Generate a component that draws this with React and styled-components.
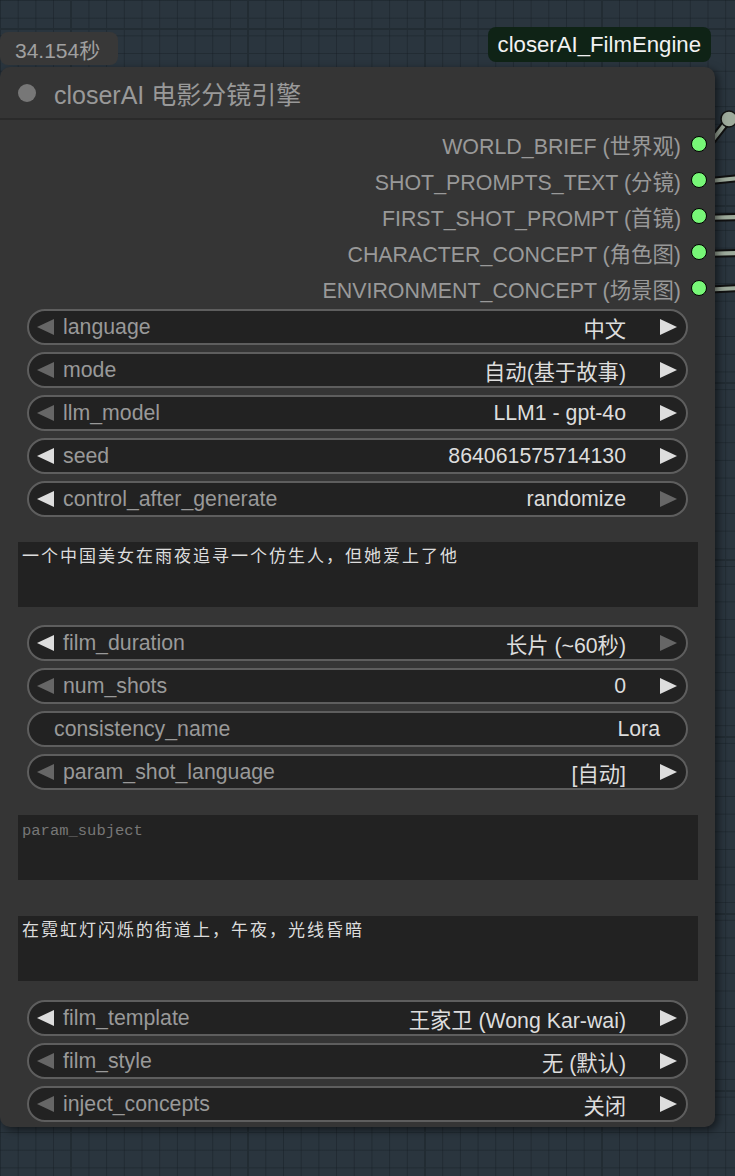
import React from "react";
import styled, { createGlobalStyle } from "styled-components";

const GlobalStyle = createGlobalStyle`
  html, body {
    margin: 0;
    padding: 0;
    background: #2a353e;
  }
  * {
    box-sizing: border-box;
  }
`;

const SANS = `"Liberation Sans", "Noto Sans CJK SC", sans-serif`;
const MONO = `"Liberation Mono", "Noto Sans CJK SC", monospace`;

const outputs = [
  "WORLD_BRIEF (世界观)",
  "SHOT_PROMPTS_TEXT (分镜)",
  "FIRST_SHOT_PROMPT (首镜)",
  "CHARACTER_CONCEPT (角色图)",
  "ENVIRONMENT_CONCEPT (场景图)",
];

const App = () => {
  return (
    <Canvas>
      <GlobalStyle />
      <Wires width="40" height="220" viewBox="0 0 40 220">
        <g strokeLinecap="round">
          <line x1="8" y1="46" x2="29" y2="19" stroke="#111" strokeWidth="8" />
          <line x1="8" y1="46" x2="29" y2="19" stroke="#9eab9c" strokeWidth="4" />
          <circle cx="29" cy="19" r="8" fill="#9eab9c" stroke="#111" strokeWidth="1.5" />
          {[
            [82, 78],
            [118, 117],
            [154, 153],
            [190, 188],
          ].map(([a, b], i) => (
            <g key={i}>
              <line x1="0" y1={a} x2="40" y2={b} stroke="#111" strokeWidth="8" />
              <line x1="0" y1={a} x2="40" y2={b} stroke="#9eab9c" strokeWidth="4" />
            </g>
          ))}
        </g>
      </Wires>
      <Node>
        <TimerBadge>34.154秒</TimerBadge>
        <TypeBadge>closerAI_FilmEngine</TypeBadge>
        <TitleBar>
          <TitleDot />
          <Title>closerAI 电影分镜引擎</Title>
        </TitleBar>
        <Outputs>
          {outputs.map((o) => (
            <OutputRow key={o}>
              <span>{o}</span>
              <Slot />
            </OutputRow>
          ))}
        </Outputs>
        <Widgets>
          <Combo label="language" value="中文" left="dim" right="on" />
          <Combo label="mode" value="自动(基于故事)" left="dim" right="on" />
          <Combo label="llm_model" value="LLM1 - gpt-4o" left="dim" right="on" />
          <Combo label="seed" value="864061575714130" left="on" right="on" />
          <Combo label="control_after_generate" value="randomize" left="on" right="dim" />
          <TextArea $mt={18} $mb={11}>一个中国美女在雨夜追寻一个仿生人，但她爱上了他</TextArea>
          <Combo label="film_duration" value="长片 (~60秒)" left="on" right="dim" />
          <Combo label="num_shots" value="0" left="dim" right="on" />
          <TextWidget>
            <Label>consistency_name</Label>
            <Value>Lora</Value>
          </TextWidget>
          <Combo label="param_shot_language" value="[自动]" left="dim" right="on" />
          <TextArea $mt={18} $mb={11} $placeholder>param_subject</TextArea>
          <TextArea $mt={18} $mb={12}>在霓虹灯闪烁的街道上，午夜，光线昏暗</TextArea>
          <Combo label="film_template" value="王家卫 (Wong Kar-wai)" left="on" right="on" />
          <Combo label="film_style" value="无 (默认)" left="dim" right="on" />
          <Combo label="inject_concepts" value="关闭" left="dim" right="on" />
        </Widgets>
      </Node>
    </Canvas>
  );
};

const Combo = ({ label, value, left, right }) => (
  <Widget>
    <ArrowLeft $on={left === "on"} />
    <Label>{label}</Label>
    <Value>{value}</Value>
    <ArrowRight $on={right === "on"} />
  </Widget>
);

export default App;

const Canvas = styled.div`
  position: relative;
  width: 735px;
  height: 1176px;
  overflow: hidden;
  padding-top: 67px;
  background-color: #2a353e;
  background-image: linear-gradient(to right, #222c33 2px, transparent 2px),
    linear-gradient(to bottom, #222c33 2px, transparent 2px),
    linear-gradient(to right, rgba(20, 28, 34, 0.4) 1px, transparent 1px),
    linear-gradient(to bottom, rgba(20, 28, 34, 0.4) 1px, transparent 1px);
  background-size: 177px 177px, 177px 177px, 17.7px 17.7px, 17.7px 17.7px;
  background-position: 70px 0, 0 28px, 0 0, 0 0;
`;

const Wires = styled.svg`
  position: absolute;
  left: 700px;
  top: 100px;
  overflow: visible;
`;

const Node = styled.div`
  position: relative;
  width: 715px;
  padding-bottom: 5px;
  background: #353535;
  border-radius: 10px;
  box-shadow: 3px 3px 8px rgba(0, 0, 0, 0.55);
  font-family: ${SANS};
`;

const TimerBadge = styled.div`
  position: absolute;
  top: -35px;
  left: 0;
  width: 118px;
  height: 33px;
  padding-left: 15px;
  display: flex;
  align-items: center;
  background: #383838;
  border-radius: 8px;
  color: #a0a0a0;
  font-size: 21px;
`;

const TypeBadge = styled.div`
  position: absolute;
  top: -40px;
  right: 4px;
  height: 35px;
  padding: 0 10px;
  display: flex;
  align-items: center;
  background: #0f2316;
  border-radius: 8px;
  color: #f2f2f2;
  font-size: 22.2px;
`;

const TitleBar = styled.div`
  height: 53px;
  display: flex;
  align-items: center;
  gap: 18px;
  padding-left: 18px;
  border-bottom: 2px solid #2a2a2a;
`;

const TitleDot = styled.div`
  width: 18px;
  height: 18px;
  border-radius: 50%;
  background: #777;
`;

const Title = styled.div`
  color: #999;
  font-size: 25px;
`;

const Outputs = styled.div`
  padding-top: 6px;
  display: flex;
  flex-direction: column;
`;

const OutputRow = styled.div`
  height: 36px;
  display: flex;
  align-items: center;
  justify-content: flex-end;
  gap: 10px;
  padding-right: 8px;
  color: #999;
  font-size: 21.4px;
`;

const Slot = styled.div`
  width: 16px;
  height: 16px;
  border-radius: 50%;
  background: #77f777;
  border: 1.5px solid #000;
`;

const Widgets = styled.div`
  padding-top: 3px;
  display: flex;
  flex-direction: column;
  gap: 7px;
`;

const Widget = styled.div`
  height: 36px;
  margin: 0 27px;
  display: flex;
  align-items: center;
  padding: 0 9px 0 8px;
  background: #222;
  border: 2px solid #5e5e5e;
  border-radius: 18px;
  font-size: 21.3px;
`;

const TextWidget = styled(Widget)`
  padding: 0 26px 0 25px;
`;

const Label = styled.span`
  color: #999;
  flex: 1;
  white-space: nowrap;
`;

const Value = styled.span`
  color: #ddd;
  white-space: nowrap;
`;

const ArrowLeft = styled.span`
  width: 0;
  height: 0;
  border-top: 8px solid transparent;
  border-bottom: 8px solid transparent;
  border-right: 17px solid ${(p) => (p.$on ? "#ddd" : "#666")};
  margin-right: 9px;
`;

const ArrowRight = styled.span`
  width: 0;
  height: 0;
  border-top: 8px solid transparent;
  border-bottom: 8px solid transparent;
  border-left: 17px solid ${(p) => (p.$on ? "#ddd" : "#666")};
  margin-left: 34px;
`;

const TextArea = styled.div`
  height: 65px;
  margin: ${(p) => p.$mt}px 17px ${(p) => p.$mb}px 18px;
  padding: 5px 4px;
  background: #222;
  color: ${(p) => (p.$placeholder ? "#777" : "#ddd")};
  font-family: ${MONO};
  font-size: ${(p) => (p.$placeholder ? "15.5px" : "17px")};
  letter-spacing: ${(p) => (p.$placeholder ? "0" : "2px")};
  line-height: 22px;
`;
